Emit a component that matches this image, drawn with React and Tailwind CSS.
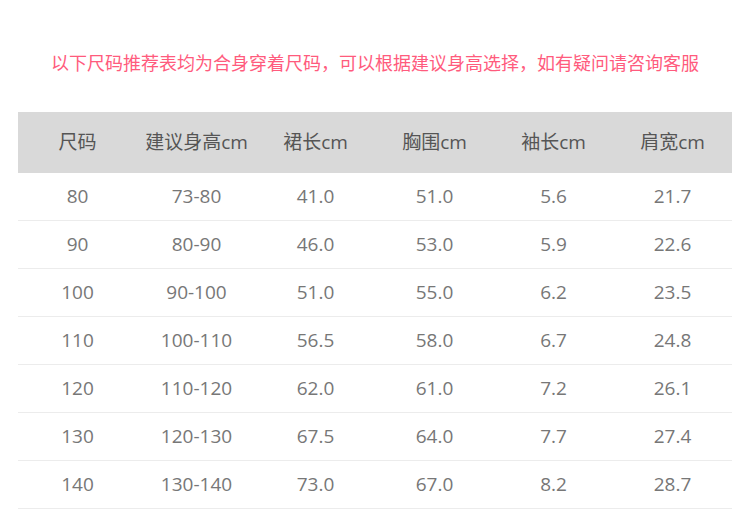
import React from 'react';

const headers = ['尺码', '建议身高cm', '裙长cm', '胸围cm', '袖长cm', '肩宽cm'];

const rows = [
  ['80', '73-80', '41.0', '51.0', '5.6', '21.7'],
  ['90', '80-90', '46.0', '53.0', '5.9', '22.6'],
  ['100', '90-100', '51.0', '55.0', '6.2', '23.5'],
  ['110', '100-110', '56.5', '58.0', '6.7', '24.8'],
  ['120', '110-120', '62.0', '61.0', '7.2', '26.1'],
  ['130', '120-130', '67.5', '64.0', '7.7', '27.4'],
  ['140', '130-140', '73.0', '67.0', '8.2', '28.7'],
];

const App = () => {
  return (
    <div className="w-[750px] h-[510px] bg-white overflow-hidden font-['Open_Sans','Noto_Sans_CJK_SC',sans-serif]">
      <p className="pt-[50px] h-[112px] text-center text-[18px] leading-[26px] text-[#ff5b7d]">
        以下尺码推荐表均为合身穿着尺码，可以根据建议身高选择，如有疑问请咨询客服
      </p>

      <div className="mx-[18px] w-[714px]">
        <div className="grid grid-cols-6 h-[61px] items-center bg-[#d9d9d9] text-[19px] text-[#555]">
          {headers.map((h) => (
            <div key={h} className="text-center">{h}</div>
          ))}
        </div>
        {rows.map((row) => (
          <div
            key={row[0]}
            className="grid grid-cols-6 h-[48px] items-center border-b border-[#ececec] text-[19px] text-[#777]"
          >
            {row.map((cell, i) => (
              <div key={i} className="text-center">{cell}</div>
            ))}
          </div>
        ))}
      </div>
    </div>
  );
};

export default App;
